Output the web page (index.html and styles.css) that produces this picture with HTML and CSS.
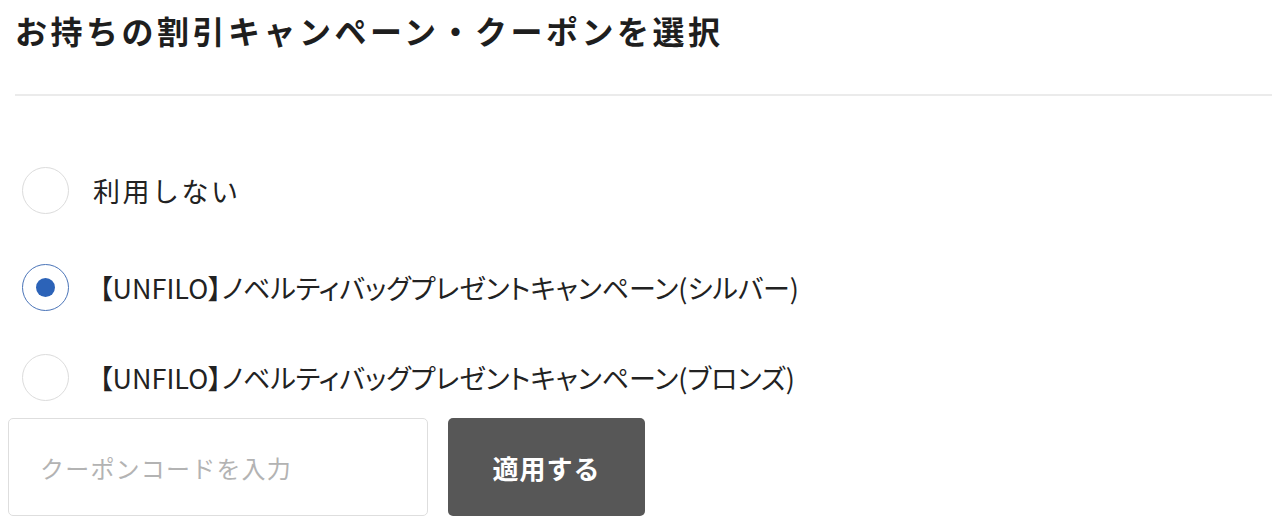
FILE: index.html
```html
<!DOCTYPE html>
<html lang="ja">
<head>
<meta charset="utf-8">
<title>割引キャンペーン・クーポン選択</title>
<link rel="stylesheet" href="styles.css">
</head>
<body>
<div class="page">
  <h1 class="title">お持ちの割引キャンペーン・クーポンを選択</h1>
  <div class="divider"></div>
  <ul class="options">
    <li class="option option-none"><span class="radio"></span><span class="label label-none">利用しない</span></li>
    <li class="option"><span class="radio radio-checked"></span><span class="label">【UNFILO】ノベルティバッグプレゼントキャンペーン(シルバー)</span></li>
    <li class="option"><span class="radio"></span><span class="label">【UNFILO】ノベルティバッグプレゼントキャンペーン(ブロンズ)</span></li>
  </ul>
  <div class="coupon">
    <input class="coupon-input" type="text" placeholder="クーポンコードを入力">
    <button class="coupon-button" type="button">適用する</button>
  </div>
</div>
</body>
</html>
```

FILE: styles.css
```css
* { box-sizing: border-box; }
html, body { margin: 0; padding: 0; background: #fff; }
body {
  font-family: "Noto Sans CJK JP", "Noto Sans", sans-serif;
  color: #222;
  overflow: hidden;
}
.page {
  padding: 0 8px;
}
.title {
  margin: 0 0 0 7px;
  padding-top: 10px;
  font-size: 32px;
  line-height: 40px;
  font-weight: 700;
  letter-spacing: 3.5px;
  color: #1e1e1e;
}
.divider {
  margin: 44px 0 0 7px;
  height: 2px;
  background: #ebebeb;
}
.options {
  list-style: none;
  margin: 0;
  padding: 71px 0 0 14px;
  display: flex;
  flex-direction: column;
  gap: 43px;
}
.option {
  display: flex;
  align-items: center;
  height: 47px;
}
.option-none { margin-bottom: 7px; }
.radio {
  flex: none;
  width: 47px;
  height: 47px;
  border-radius: 50%;
  border: 1px solid #dcdcdc;
  display: flex;
  align-items: center;
  justify-content: center;
}
.radio-checked {
  border-color: #4a74b8;
}
.radio-checked::after {
  content: "";
  width: 19px;
  height: 19px;
  border-radius: 50%;
  background: #2c63b8;
}
.label {
  margin-left: 30px;
  font-size: 27px;
  line-height: 36px;
  color: #222;
  font-feature-settings: "palt";
}
.label-none {
  margin-left: 24px;
  font-feature-settings: normal;
  letter-spacing: 2.5px;
}
.coupon {
  display: flex;
  gap: 20px;
  margin-top: 17px;
}
.coupon-input {
  width: 420px;
  height: 98px;
  border: 1px solid #dedede;
  border-radius: 5px;
  padding: 0 0 0 31px;
  font-family: inherit;
  font-size: 24px;
  letter-spacing: 1.2px;
  color: #222;
  outline: none;
}
.coupon-input::placeholder { color: #b3b3b3; }
.coupon-button {
  width: 197px;
  height: 98px;
  border: none;
  border-radius: 5px;
  background: #575757;
  color: #fff;
  font-family: inherit;
  font-size: 26px;
  font-weight: 700;
  letter-spacing: 1px;
}
```
